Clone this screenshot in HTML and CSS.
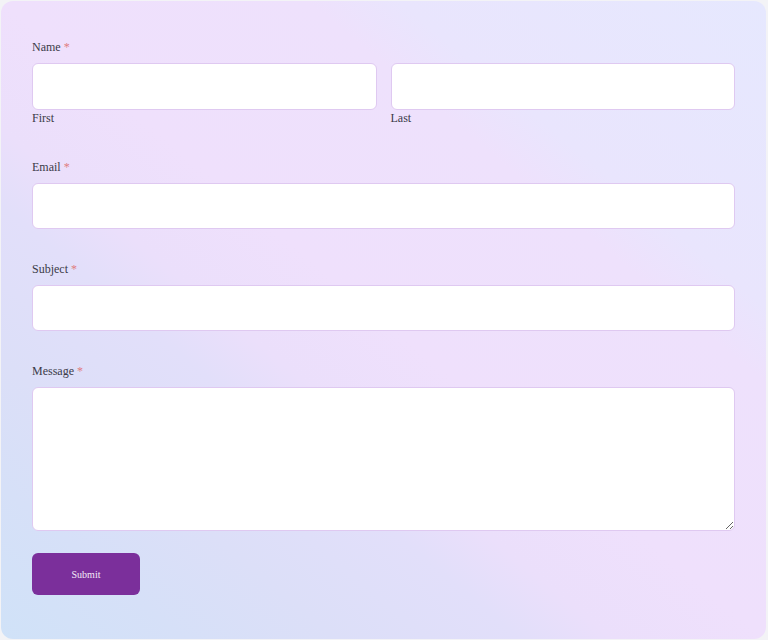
FILE: index.html
```html
<!DOCTYPE html>
<html lang="en">
<head>
<meta charset="utf-8">
<title>Contact form</title>
<link rel="stylesheet" href="styles.css">
</head>
<body>
<form class="card">
  <div class="field">
    <div class="label">Name <span class="req">*</span></div>
    <div class="name-row">
      <div class="sub">
        <input class="input" type="text">
        <div class="sublabel">First</div>
      </div>
      <div class="sub">
        <input class="input" type="text">
        <div class="sublabel">Last</div>
      </div>
    </div>
  </div>
  <div class="field">
    <div class="label">Email <span class="req">*</span></div>
    <input class="input" type="email">
  </div>
  <div class="field">
    <div class="label">Subject <span class="req">*</span></div>
    <input class="input" type="text">
  </div>
  <div class="field">
    <div class="label">Message <span class="req">*</span></div>
    <textarea class="input textarea"></textarea>
  </div>
  <button class="submit" type="button">Submit</button>
</form>
</body>
</html>
```
FILE: styles.css
```css
* { box-sizing: border-box; }
html, body { height: 100%; }
body {
  margin: 0;
  padding: 1px 2px 1px 1px;
  background: #f3f3f6;
  font-family: "Liberation Serif", "Times New Roman", serif;
  color: #3b3b48;
}
.card {
  min-height: 100%;
  border-radius: 12px;
  padding: 38px 31px 44px 31px;
  background: linear-gradient(to top right,
    #d0e2f8 0%, #d6e0f8 12%, #dcdff8 22%, #e2dffa 34%,
    #ebdffb 40%, #efe0fc 50%, #eee1fc 70%,
    #e9e5fd 76%, #e6e8fe 100%);
  display: flex;
  flex-direction: column;
}
.field { display: flex; flex-direction: column; margin-bottom: 32px; flex-shrink: 0; }
.field:nth-child(4) { margin-bottom: 22px; }
.label {
  font-size: 12px;
  line-height: 16px;
  margin-bottom: 8px;
}
.req { color: #e07c80; }
.name-row { display: flex; gap: 14px; }
.sub { flex: 1; display: flex; flex-direction: column; }
.sub .input { height: 47px; }
.sublabel { font-size: 12px; line-height: 17px; }
.input {
  display: block;
  width: 100%;
  height: 46px;
  border: 1px solid #dfc9f1;
  border-radius: 6px;
  background: #ffffff;
  font-family: inherit;
  outline: none;
}
.textarea {
  height: 144px;
  resize: both;
}
.submit {
  flex-shrink: 0;
  width: 108px;
  height: 42px;
  border: none;
  border-radius: 6px;
  background: #7b2f9b;
  color: #f4eaf8;
  font-family: "Liberation Serif", "Times New Roman", serif;
  font-size: 10px;
  padding: 0;
}
```
